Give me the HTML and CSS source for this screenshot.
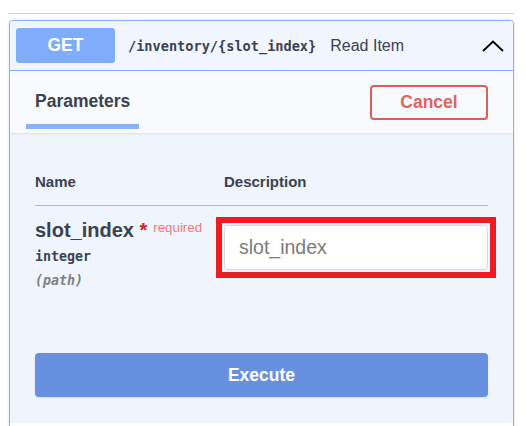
FILE: index.html
```html
<!DOCTYPE html>
<html>
<head>
<meta charset="utf-8">
<link rel="stylesheet" href="styles.css">
</head>
<body>
<div class="page">
  <div class="tag-line"></div>
  <div class="opblock">
    <div class="summary">
      <span class="method">GET</span>
      <span class="path">/inventory/{slot_index}</span>
      <span class="summary-desc">Read Item</span>
      <svg class="chevron" width="22" height="12" viewBox="0 0 22 12"><polyline points="1,11 11,1.5 21,11" fill="none" stroke="#000" stroke-width="1.8"/></svg>
    </div>
    <div class="body">
      <div class="section-header">
        <div class="tab">Parameters</div>
        <button class="cancel">Cancel</button>
      </div>
      <div class="params">
        <div class="row head">
          <div class="th">Name</div>
          <div class="th">Description</div>
        </div>
        <div class="row param">
          <div class="name-cell">
            <div class="pname">slot_index<span class="star">&nbsp;*</span><span class="req">required</span></div>
            <div class="ptype">integer</div>
            <div class="pin">(path)</div>
          </div>
          <div class="desc-cell">
            <div class="highlight"><input class="field" type="text" placeholder="slot_index"></div>
          </div>
        </div>
      </div>
      <div class="execute-wrapper">
        <button class="execute">Execute</button>
      </div>
      <div class="responses-header"></div>
    </div>
  </div>
</div>
</body>
</html>
```

FILE: styles.css
```css
html, body {
  margin: 0;
  padding: 0;
  background: #ffffff;
  overflow: hidden;
}
body {
  font-family: "Liberation Sans", Arial, sans-serif;
  color: #3b4151;
}
.page {
  width: 505px;
  padding: 13px 0 0 9px;
}
.tag-line {
  height: 1px;
  background: #cfd1d5;
}
.opblock {
  margin-top: 6px;
  border: 1px solid #86b0f8;
  border-radius: 4px;
  background: #eff4fd;
  box-shadow: 0 0 3px rgba(0,0,0,0.15);
  overflow: hidden;
}
.summary {
  display: flex;
  align-items: center;
  padding: 7px 9px 7px 6px;
  border-bottom: 1px solid #86b0f8;
  background: #f0f5fe;
}
.method {
  width: 99px;
  height: 35px;
  border-radius: 3px;
  background: #80adfa;
  color: #fff;
  font-weight: bold;
  font-size: 17.5px;
  display: flex;
  align-items: center;
  justify-content: center;
}
.path {
  margin-left: 13px;
  font-family: "DejaVu Sans Mono", "Liberation Mono", monospace;
  font-weight: bold;
  font-size: 13.6px;
  color: #3b4151;
}
.summary-desc {
  margin-left: 14px;
  font-size: 16px;
  color: #3b4151;
}
.chevron {
  margin-left: auto;
  display: block;
}
.section-header {
  display: flex;
  justify-content: space-between;
  align-items: center;
  height: 62px;
  padding: 0 25px 0 16px;
  background: #f8fafe;
  box-shadow: 0 1px 2px rgba(0,0,0,0.08);
}
.tab {
  align-self: flex-start;
  padding: 20px 9px 13px;
  line-height: 20px;
  font-size: 17.5px;
  font-weight: bold;
  color: #3b4151;
  border-bottom: 5px solid #89b2fa;
}
.cancel {
  width: 118px;
  height: 35px;
  border: 2px solid #df5c55;
  border-radius: 4px;
  background: transparent;
  color: #e0645c;
  font-family: "Liberation Sans", Arial, sans-serif;
  font-weight: bold;
  font-size: 17.5px;
  padding: 0;
}
.params {
  padding: 0 25px;
}
.row {
  display: grid;
  grid-template-columns: 189px 1fr;
}
.head {
  padding: 40px 0 15px;
  border-bottom: 1px solid #b4b8c1;
}
.th {
  font-size: 15px;
  line-height: 17px;
  font-weight: bold;
  color: #3b4151;
}
.param {
  padding-top: 13px;
  align-items: start;
}
.pname {
  font-size: 20px;
  line-height: 23px;
  font-weight: bold;
  color: #3b4151;
  white-space: nowrap;
}
.star {
  color: #d02424;
}
.req {
  font-size: 13.3px;
  font-weight: normal;
  color: #f07a76;
  vertical-align: top;
  position: relative;
  top: -3px;
  margin-left: 6px;
}
.ptype {
  margin-top: 5px;
  font-family: "DejaVu Sans Mono", "Liberation Mono", monospace;
  font-weight: bold;
  font-size: 13.3px;
  line-height: 20px;
  color: #3b4151;
}
.pin {
  margin-top: 4px;
  font-family: "DejaVu Sans Mono", "Liberation Mono", monospace;
  font-style: italic;
  font-weight: bold;
  font-size: 13.3px;
  line-height: 20px;
  color: #808080;
}
.desc-cell {
  padding-top: 6px;
}
.highlight {
  margin: -8px;
  padding: 2px;
  border: 6px solid #ed1c24;
}
.field {
  display: block;
  box-sizing: border-box;
  width: 100%;
  height: 45px;
  margin: 0;
  padding: 0 14px;
  border: 1px solid #d9d9d9;
  border-radius: 4px;
  background: #fff;
  font-family: "Liberation Sans", Arial, sans-serif;
  font-size: 19.5px;
  color: #3b4151;
  outline: none;
}
.field::placeholder {
  color: #7b7b7b;
}
.execute-wrapper {
  padding: 62px 25px 26px;
}
.execute {
  display: block;
  width: 100%;
  height: 44px;
  border: none;
  border-radius: 4px;
  background: #6790e0;
  color: #fff;
  font-family: "Liberation Sans", Arial, sans-serif;
  font-weight: bold;
  font-size: 17.5px;
  box-shadow: 0 1px 2px rgba(0,0,0,0.1);
}
.responses-header {
  height: 60px;
  background: #fdfeff;
}
```
